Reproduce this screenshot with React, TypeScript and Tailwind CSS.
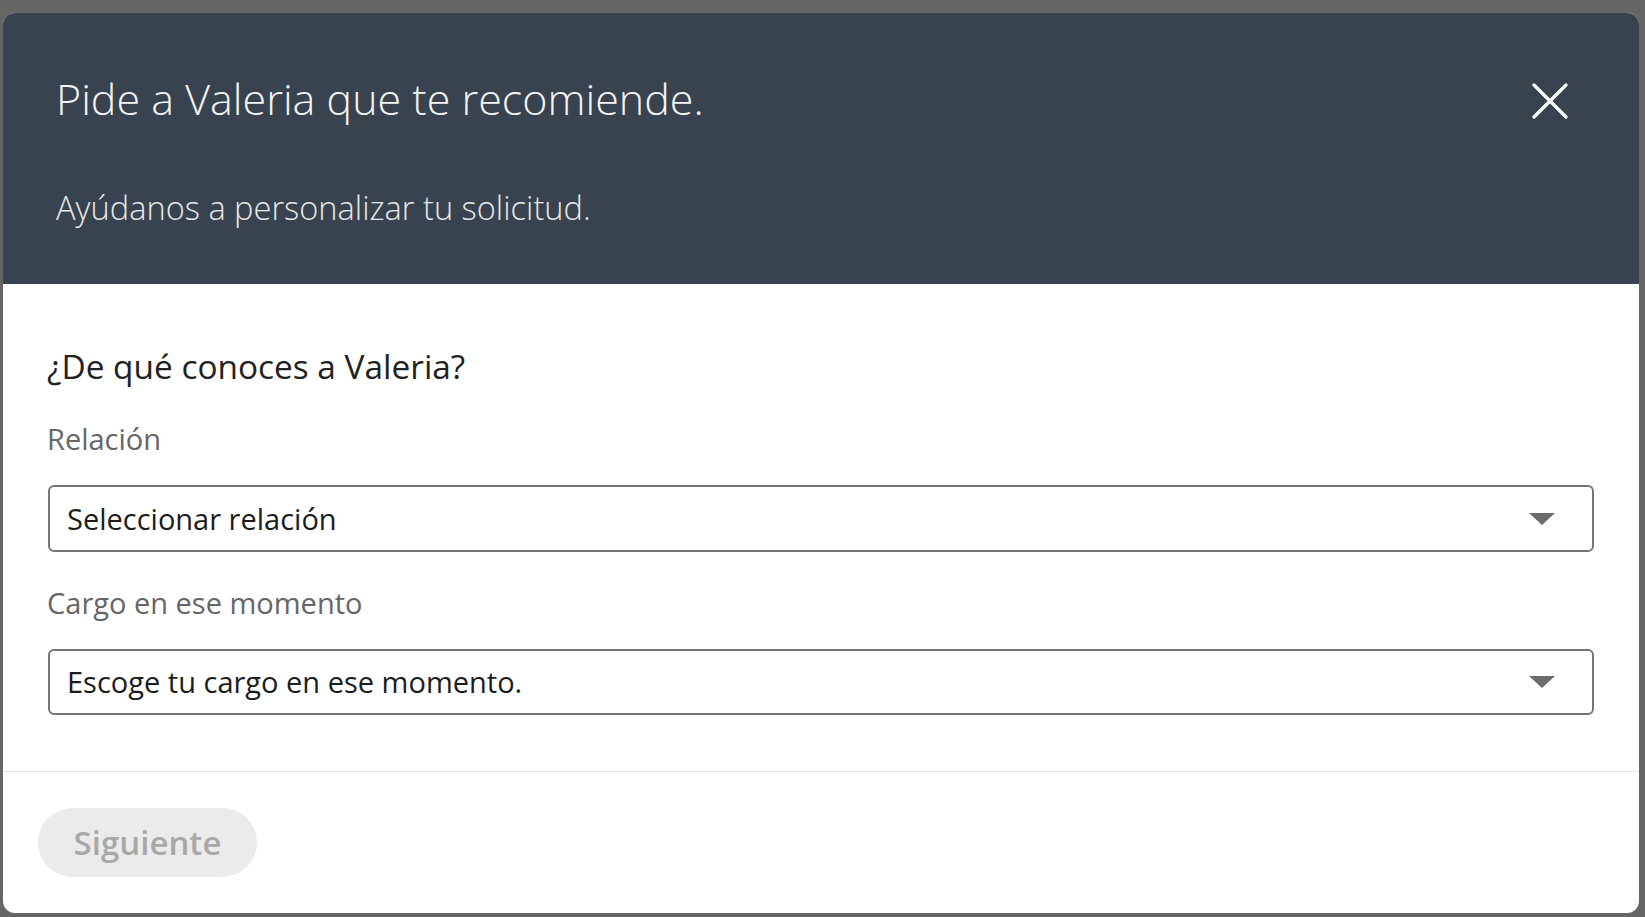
const font = { fontFamily: '"Open Sans", "Noto Sans", sans-serif' };

function SelectBox({ text }: { text: string }) {
  return (
    <div className="flex h-full items-center justify-between rounded-[6px] border-2 border-[#767676] bg-white pl-[17px] pr-[36px]">
      <span className="text-[29px] leading-[36px] text-[#1c1c1c]">{text}</span>
      <svg width="28" height="14" viewBox="0 0 28 14" className="text-[#6b6b6b]">
        <path d="M1 1h26L14 13z" fill="currentColor" />
      </svg>
    </div>
  );
}

export default function App() {
  return (
    <div className="min-h-screen bg-[#666666] pt-[13px] pl-[3px]" style={font}>
      <div className="w-[1636px] overflow-hidden rounded-[12px] bg-white">
        {/* header */}
        <div className="flex h-[271px] justify-between bg-[#38434f] pl-[53px] pr-[71px]">
          <div className="pt-[58px]">
            <h1 className="text-[43px] font-light leading-[56px] text-[#f4f4f4]">
              Pide a Valeria que te recomiende.
            </h1>
            <p className="mt-[61px] text-[32.6px] font-light leading-[40px] text-[#e8e8e8]">
              Ayúdanos a personalizar tu solicitud.
            </p>
          </div>
          <button className="mt-[70px] h-[36px] w-[36px] text-white">
            <svg width="36" height="36" viewBox="0 0 36 36" fill="none" stroke="currentColor" strokeWidth="3.2" strokeLinecap="round">
              <path d="M2 2l32 32M34 2L2 34" />
            </svg>
          </button>
        </div>

        {/* body */}
        <div className="px-[44px] pt-[64px] pb-[56px]">
          <h2 className="text-[33.4px] leading-[36px] text-[#222222]">¿De qué conoces a Valeria?</h2>
          <p className="mt-[37px] text-[29px] leading-[36px] text-[#666666]">Relación</p>
          <div className="mt-[28px] ml-[1px] h-[67px] w-[1546px]">
            <SelectBox text="Seleccionar relación" />
          </div>
          <p className="mt-[33px] text-[29px] leading-[36px] text-[#666666]">Cargo en ese momento</p>
          <div className="mt-[28px] ml-[1px] h-[66px] w-[1546px]">
            <SelectBox text="Escoge tu cargo en ese momento." />
          </div>
        </div>

        {/* footer */}
        <div className="border-t border-[#e6e6e6] px-[35px] py-[36px]">
          <button className="h-[69px] w-[219px] rounded-full bg-[#ebebeb] text-[33px] font-semibold text-[#a8a8a8]">
            Siguiente
          </button>
        </div>
      </div>
    </div>
  );
}
